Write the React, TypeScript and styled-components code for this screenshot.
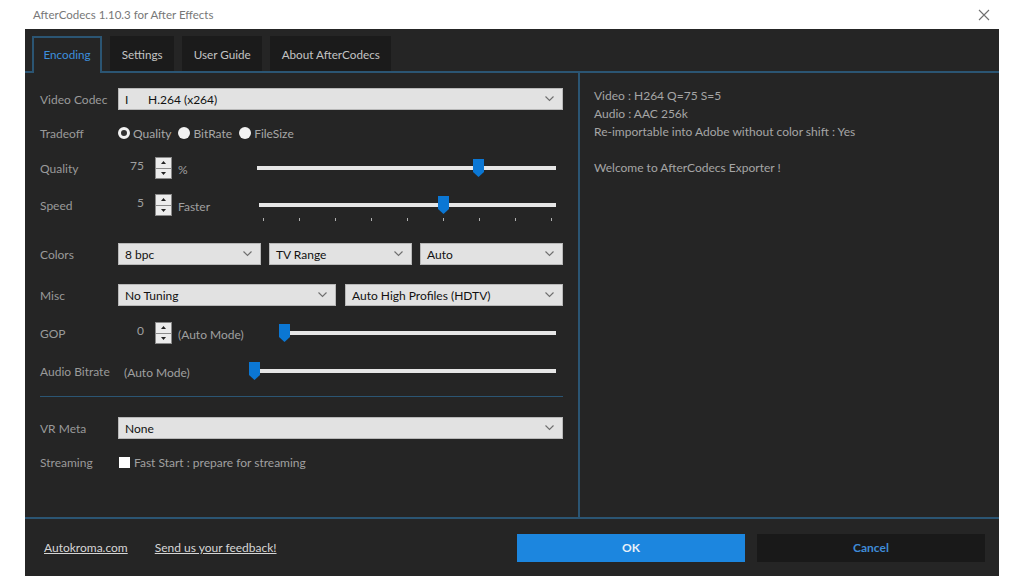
import styled, { createGlobalStyle } from 'styled-components';

const BLUE_LINE = '#2b5573';

const GlobalStyle = createGlobalStyle`
  html, body {
    margin: 0;
    padding: 0;
    background: #ffffff;
  }
  body {
    font-family: Lato, 'Noto Sans', 'Liberation Sans', sans-serif;
    font-size: 12px;
  }
  #root {
    width: 1024px;
    height: 576px;
    overflow: hidden;
  }
`;

const Chevron = () => (
    <svg width="9" height="6" viewBox="0 0 9 6">
        <polyline points="0.5,0.5 4.5,4.5 8.5,0.5" fill="none" stroke="#6f6f6f" strokeWidth="1.1" />
    </svg>
);

const Select = ({ children, grow = 1 }: { children: React.ReactNode; grow?: number }) => (
    <Dropdown $grow={grow}>
        <DropdownValue>{children}</DropdownValue>
        <Chevron />
    </Dropdown>
);

const Spinner = () => (
    <SpinBox>
        <SpinHalf>
            <svg width="5" height="3" viewBox="0 0 5 3"><polygon points="0,3 5,3 2.5,0" fill="#222" /></svg>
        </SpinHalf>
        <SpinHalf>
            <svg width="5" height="3" viewBox="0 0 5 3"><polygon points="0,0 5,0 2.5,3" fill="#222" /></svg>
        </SpinHalf>
    </SpinBox>
);

const Slider = ({ width, value, ticks = 0 }: { width: number; value: number; ticks?: number }) => (
    <SliderBox $w={width}>
        <Track />
        <Thumb style={{ left: `calc(${value * 100}% - 5px)` }}>
            <svg width="11" height="18" viewBox="0 0 11 18">
                <polygon points="0,0 11,0 11,13 5.5,18 0,13" fill="#0b77d4" />
            </svg>
        </Thumb>
        {ticks > 0 && (
            <Ticks>
                {Array.from({ length: ticks }).map((_, i) => (
                    <Tick key={i} />
                ))}
            </Ticks>
        )}
    </SliderBox>
);

export default function App() {
    return (
        <>
            <GlobalStyle />
            <Window>
                <TitleBar>
                    <span>AfterCodecs 1.10.3 for After Effects</span>
                    <svg width="12" height="12" viewBox="0 0 12 12">
                        <path d="M1 1 L11 11 M11 1 L1 11" stroke="#707070" strokeWidth="1.1" />
                    </svg>
                </TitleBar>
                <Body>
                    <TabBar>
                        <Tab $active>Encoding</Tab>
                        <Tab>Settings</Tab>
                        <Tab>User Guide</Tab>
                        <Tab>About AfterCodecs</Tab>
                    </TabBar>
                    <Main>
                        <LeftPanel>
                            <Row $mt={0}>
                                <Label>Video Codec</Label>
                                <Select>
                                    <CodecFlag>I</CodecFlag>H.264 (x264)
                                </Select>
                            </Row>
                            <Row $mt={12}>
                                <Label>Tradeoff</Label>
                                <RadioGroup>
                                    <RadioItem><Radio $checked />Quality</RadioItem>
                                    <RadioItem><Radio />BitRate</RadioItem>
                                    <RadioItem><Radio />FileSize</RadioItem>
                                </RadioGroup>
                            </Row>
                            <Row $mt={13}>
                                <Label>Quality</Label>
                                <Value>75</Value>
                                <Spinner />
                                <Unit>%</Unit>
                                <Slider width={299} value={0.74} />
                            </Row>
                            <Row $mt={15}>
                                <Label>Speed</Label>
                                <Value>5</Value>
                                <Spinner />
                                <Unit>Faster</Unit>
                                <Slider width={297} value={0.618} ticks={9} />
                            </Row>
                            <Row $mt={27}>
                                <Label>Colors</Label>
                                <Controls>
                                    <Select>8 bpc</Select>
                                    <Select>TV Range</Select>
                                    <Select>Auto</Select>
                                </Controls>
                            </Row>
                            <Row $mt={19}>
                                <Label>Misc</Label>
                                <Controls $gap={9}>
                                    <Select>No Tuning</Select>
                                    <Select>Auto High Profiles (HDTV)</Select>
                                </Controls>
                            </Row>
                            <Row $mt={16}>
                                <Label>GOP</Label>
                                <Value>0</Value>
                                <Spinner />
                                <Unit>(Auto Mode)</Unit>
                                <Slider width={272} value={0} />
                            </Row>
                            <Row $mt={16}>
                                <Label>Audio Bitrate</Label>
                                <Unit>(Auto Mode)</Unit>
                                <Slider width={302} value={0} />
                            </Row>
                            <Separator />
                            <Row $mt={20}>
                                <Label>VR Meta</Label>
                                <Select>None</Select>
                            </Row>
                            <Row $mt={12}>
                                <Label>Streaming</Label>
                                <CheckItem>
                                    <Checkbox />
                                    Fast Start : prepare for streaming
                                </CheckItem>
                            </Row>
                        </LeftPanel>
                        <RightPanel>
                            <InfoLine>Video : H264 Q=75 S=5</InfoLine>
                            <InfoLine>Audio : AAC 256k</InfoLine>
                            <InfoLine>Re-importable into Adobe without color shift : Yes</InfoLine>
                            <InfoLine>&nbsp;</InfoLine>
                            <InfoLine>Welcome to AfterCodecs Exporter !</InfoLine>
                        </RightPanel>
                    </Main>
                    <Footer>
                        <Links>
                            <Link>Autokroma.com</Link>
                            <Link>Send us your feedback!</Link>
                        </Links>
                        <Buttons>
                            <Button $primary>OK</Button>
                            <Button>Cancel</Button>
                        </Buttons>
                    </Footer>
                </Body>
            </Window>
        </>
    );
}

const Window = styled.div`
    margin-left: 25px;
    width: 974px;
    height: 576px;
    display: flex;
    flex-direction: column;
`;

const TitleBar = styled.div`
    height: 29px;
    flex: none;
    display: flex;
    align-items: center;
    justify-content: space-between;
    padding: 0 9px 0 8px;
    background: #ffffff;
    color: #777777;
    font-size: 11.5px;
`;

const Body = styled.div`
    flex: 1;
    display: flex;
    flex-direction: column;
    background: #252525;
`;

const TabBar = styled.div`
    height: 44px;
    flex: none;
    box-sizing: border-box;
    display: flex;
    align-items: flex-end;
    gap: 8px;
    padding-left: 7px;
    border-bottom: 2px solid ${BLUE_LINE};
`;

const Tab = styled.div<{ $active?: boolean }>`
    height: ${(p) => (p.$active ? '37px' : '35px')};
    box-sizing: border-box;
    display: flex;
    align-items: center;
    padding: 0 9.5px ${(p) => (p.$active ? '4px' : '2px')};
    margin-bottom: ${(p) => (p.$active ? '-2px' : '0')};
    background: ${(p) => (p.$active ? '#252525' : '#1b1b1b')};
    border: 2px solid ${(p) => (p.$active ? BLUE_LINE : '#1b1b1b')};
    border-bottom: none;
    color: ${(p) => (p.$active ? '#3d8fdc' : '#c4c4c4')};
    font-size: 11.7px;
`;

const Main = styled.div`
    height: 446px;
    flex: none;
    box-sizing: border-box;
    display: flex;
    border-bottom: 2px solid ${BLUE_LINE};
`;

const LeftPanel = styled.div`
    width: 555px;
    flex: none;
    box-sizing: border-box;
    padding: 15px 15px 0 15px;
    display: flex;
    flex-direction: column;
    border-right: 2px solid ${BLUE_LINE};
`;

const RightPanel = styled.div`
    flex: 1;
    padding: 14px 14px;
    color: #a6a6a6;
    font-size: 12px;
    line-height: 18px;
`;

const InfoLine = styled.div``;

const Row = styled.div<{ $mt: number }>`
    height: 22px;
    flex: none;
    margin-top: ${(p) => p.$mt}px;
    display: flex;
    align-items: center;
`;

const Label = styled.div`
    width: 78px;
    flex: none;
    color: #9a9a9a;
    font-size: 12px;
`;

const Controls = styled.div<{ $gap?: number }>`
    flex: 1;
    display: flex;
    gap: ${(p) => p.$gap ?? 8}px;
`;

const Dropdown = styled.div<{ $grow: number }>`
    flex: ${(p) => p.$grow};
    height: 22px;
    box-sizing: border-box;
    display: flex;
    align-items: center;
    justify-content: space-between;
    padding: 0 8px 0 6px;
    background: #e2e2e2;
    border: 1px solid #b8b8b8;
    color: #111111;
    font-size: 12px;
`;

const DropdownValue = styled.span`
    display: flex;
    align-items: center;
`;

const CodecFlag = styled.span`
    width: 23px;
`;

const RadioGroup = styled.div`
    display: flex;
    gap: 7px;
`;

const RadioItem = styled.label`
    display: flex;
    align-items: center;
    gap: 3px;
    color: #a8a8a8;
`;

const Radio = styled.span<{ $checked?: boolean }>`
    width: 12px;
    height: 12px;
    box-sizing: border-box;
    border-radius: 50%;
    background: ${(p) => (p.$checked ? '#333333' : '#f2f2f2')};
    border: ${(p) => (p.$checked ? '3px solid #f2f2f2' : 'none')};
`;

const Value = styled.div`
    width: 26px;
    flex: none;
    text-align: right;
    color: #a0a0a0;
    margin-top: -6px;
`;

const SpinBox = styled.div`
    width: 17px;
    height: 22px;
    flex: none;
    margin-left: 11px;
    box-sizing: border-box;
    display: flex;
    flex-direction: column;
    gap: 1px;
    padding: 1px;
    background: #8a8a8a;
`;

const SpinHalf = styled.div`
    flex: 1;
    display: flex;
    align-items: center;
    justify-content: center;
    background: #ececec;
`;

const Unit = styled.div`
    margin-left: 6px;
    color: #a0a0a0;
    margin-top: 2px;
`;

const SliderBox = styled.div<{ $w: number }>`
    width: ${(p) => p.$w}px;
    flex: none;
    margin-left: auto;
    margin-right: 7px;
    height: 22px;
    position: relative;
    display: flex;
    align-items: center;
`;

const Track = styled.div`
    width: 100%;
    height: 4px;
    background: #e6e6e6;
`;

const Thumb = styled.div`
    position: absolute;
    top: 2px;
    width: 11px;
    height: 18px;
    display: flex;
`;

const Ticks = styled.div`
    position: absolute;
    left: 4px;
    right: 4px;
    top: 24px;
    display: flex;
    justify-content: space-between;
`;

const Tick = styled.span`
    width: 1px;
    height: 3px;
    background: #b0b0b0;
`;

const Separator = styled.div`
    height: 1px;
    flex: none;
    margin-top: 14px;
    background: ${BLUE_LINE};
`;

const CheckItem = styled.label`
    display: flex;
    align-items: center;
    gap: 4px;
    color: #a0a0a0;
    margin-left: 1px;
`;

const Checkbox = styled.span`
    width: 11px;
    height: 11px;
    background: #ffffff;
`;

const Footer = styled.div`
    flex: 1;
    display: flex;
    align-items: center;
    padding: 0 14px 0 19px;
`;

const Links = styled.div`
    display: flex;
    gap: 27px;
`;

const Link = styled.a`
    color: #d6d6d6;
    text-decoration: underline;
    font-size: 12px;
`;

const Buttons = styled.div`
    margin-left: auto;
    display: flex;
    gap: 12px;
`;

const Button = styled.div<{ $primary?: boolean }>`
    width: 228px;
    height: 28px;
    display: flex;
    align-items: center;
    justify-content: center;
    background: ${(p) => (p.$primary ? '#1c86df' : '#191919')};
    color: ${(p) => (p.$primary ? '#e8f0f8' : '#3f8bd6')};
    font-weight: bold;
    font-size: 12px;
`;
